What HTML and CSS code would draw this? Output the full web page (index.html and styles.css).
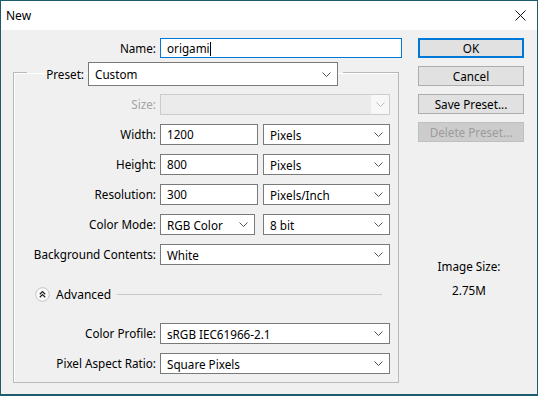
FILE: index.html
```html
<!DOCTYPE html>
<html lang="en">
<head>
  <meta charset="UTF-8" />
  <title>New</title>
  <link rel="stylesheet" href="styles.css">
</head>
<body>
  <div class="window">
    <div class="titlebar">
      <span class="title">New</span>
      <svg class="close" width="11" height="11" viewBox="0 0 11 11">
        <path d="M0.5 0.5 L10.5 10.5 M10.5 0.5 L0.5 10.5" stroke="#111" stroke-width="1" fill="none"/>
      </svg>
    </div>

    <div class="body">
      <div class="main">
        <div class="name-row">
          <label class="lbl">Name:</label>
          <div class="field focus">origami<span class="caret"></span></div>
        </div>

        <fieldset class="group">
          <legend class="preset">
            <label class="lbl">Preset:</label>
            <div class="combo tall">
              <span>Custom</span>
              <svg class="chev" width="9" height="5" viewBox="0 0 9 5"><polyline points="0.5,0.5 4.5,4.5 8.5,0.5" fill="none" stroke="#555"/></svg>
            </div>
          </legend>

          <div class="grid">
            <label class="lbl off">Size:</label>
            <div class="combo disabled">
              <span></span>
              <span class="arrow-box"><svg class="chev" width="9" height="5" viewBox="0 0 9 5"><polyline points="0.5,0.5 4.5,4.5 8.5,0.5" fill="none" stroke="#bcbcbc"/></svg></span>
            </div>

            <label class="lbl">Width:</label>
            <div class="pair">
              <div class="field num">1200</div>
              <div class="combo unit"><span>Pixels</span><svg class="chev" width="9" height="5" viewBox="0 0 9 5"><polyline points="0.5,0.5 4.5,4.5 8.5,0.5" fill="none" stroke="#555"/></svg></div>
            </div>

            <label class="lbl">Height:</label>
            <div class="pair">
              <div class="field num">800</div>
              <div class="combo unit"><span>Pixels</span><svg class="chev" width="9" height="5" viewBox="0 0 9 5"><polyline points="0.5,0.5 4.5,4.5 8.5,0.5" fill="none" stroke="#555"/></svg></div>
            </div>

            <label class="lbl">Resolution:</label>
            <div class="pair">
              <div class="field num">300</div>
              <div class="combo unit"><span>Pixels/Inch</span><svg class="chev" width="9" height="5" viewBox="0 0 9 5"><polyline points="0.5,0.5 4.5,4.5 8.5,0.5" fill="none" stroke="#555"/></svg></div>
            </div>

            <label class="lbl">Color Mode:</label>
            <div class="pair">
              <div class="combo mode"><span>RGB Color</span><svg class="chev" width="9" height="5" viewBox="0 0 9 5"><polyline points="0.5,0.5 4.5,4.5 8.5,0.5" fill="none" stroke="#555"/></svg></div>
              <div class="combo unit"><span>8 bit</span><svg class="chev" width="9" height="5" viewBox="0 0 9 5"><polyline points="0.5,0.5 4.5,4.5 8.5,0.5" fill="none" stroke="#555"/></svg></div>
            </div>

            <label class="lbl">Background Contents:</label>
            <div class="combo"><span>White</span><svg class="chev" width="9" height="5" viewBox="0 0 9 5"><polyline points="0.5,0.5 4.5,4.5 8.5,0.5" fill="none" stroke="#555"/></svg></div>

            <div class="advanced">
              <svg class="adv-icon" width="15" height="15" viewBox="0 0 15 15">
                <circle cx="7.5" cy="7.5" r="6.8" fill="#fafafa" stroke="#c4c4c4"/>
                <polyline points="4.8,7.2 7.5,4.6 10.2,7.2" fill="none" stroke="#222" stroke-width="1.2"/>
                <polyline points="4.8,10.2 7.5,7.6 10.2,10.2" fill="none" stroke="#222" stroke-width="1.2"/>
              </svg>
              <span>Advanced</span>
              <span class="rule"></span>
            </div>

            <label class="lbl">Color Profile:</label>
            <div class="combo"><span>sRGB IEC61966-2.1</span><svg class="chev" width="9" height="5" viewBox="0 0 9 5"><polyline points="0.5,0.5 4.5,4.5 8.5,0.5" fill="none" stroke="#555"/></svg></div>

            <label class="lbl">Pixel Aspect Ratio:</label>
            <div class="combo"><span>Square Pixels</span><svg class="chev" width="9" height="5" viewBox="0 0 9 5"><polyline points="0.5,0.5 4.5,4.5 8.5,0.5" fill="none" stroke="#555"/></svg></div>
          </div>
        </fieldset>
      </div>

      <div class="side">
        <button class="btn default">OK</button>
        <button class="btn">Cancel</button>
        <button class="btn">Save Preset...</button>
        <button class="btn" disabled>Delete Preset...</button>

        <div class="image-size">
          <div>Image Size:</div>
          <div>2.75M</div>
        </div>
      </div>
    </div>
  </div>
</body>
</html>
```

FILE: styles.css
```css
* {
  box-sizing: border-box;
}
body {
  margin: 0;
  font-family: 'Noto Sans', sans-serif;
  font-size: 11.7px;
  color: #000;
  background: #1f5c6b;
}
.window {
  width: 538px;
  height: 396px;
  border: 1px solid #1f5c6b;
  border-bottom-width: 2px;
  display: flex;
  flex-direction: column;
  background: #f0f0f0;
}
.titlebar {
  height: 29px;
  background: #fff;
  display: flex;
  align-items: center;
  justify-content: space-between;
  padding: 0 11px 0 5px;
  font-size: 12px;
}
.titlebar .close {
  margin-top: -1px;
}
.body {
  flex: 1;
  display: flex;
  padding: 8px 0 0 12px;
}
.main {
  width: 389px;
}
.lbl {
  text-align: right;
  line-height: 20px;
  white-space: nowrap;
}
.lbl.off {
  color: #a3a3a3;
}

/* name row */
.name-row {
  display: grid;
  grid-template-columns: 143px 242px;
  column-gap: 4px;
  height: 20px;
}
.field {
  height: 21px;
  background: #fff;
  border: 1px solid #7a7a7a;
  padding: 0 6px;
  line-height: 19px;
  white-space: nowrap;
}
.field.focus {
  height: 20px;
  border-color: #0078d7;
  line-height: 18px;
}
.caret {
  display: inline-block;
  width: 1px;
  height: 14px;
  background: #000;
  vertical-align: -3px;
}
.field.num {
  width: 98px;
}

/* group box */
.group {
  width: 386px;
  margin: 0;
  padding: 8px 8px 8px 10px;
  border: 1px solid #b8b8b8;
  box-shadow: inset 1px 1px 0 #fff;
}
.preset {
  display: flex;
  align-items: center;
  gap: 4px;
  padding: 4px 5px 0 0;
  margin-left: 3px;
}
.preset .lbl {
  width: 57px;
}
.grid {
  display: grid;
  grid-template-columns: 132px 230px;
  column-gap: 4px;
  row-gap: 9px;
}
.grid .lbl {
  line-height: 21px;
}

/* combo boxes */
.combo {
  height: 21px;
  background: #fff;
  border: 1px solid #7a7a7a;
  display: flex;
  align-items: center;
  justify-content: space-between;
  padding: 0 6px 0 6px;
  white-space: nowrap;
}
.combo.tall {
  width: 250px;
  height: 24px;
}
.combo.disabled {
  background: #ebebeb;
  border-color: #cccccc;
  padding: 0;
}
.arrow-box {
  width: 18px;
  height: 100%;
  background: #f7f7f7;
  display: flex;
  align-items: center;
  justify-content: center;
}
.chev {
  flex: none;
}
.pair {
  display: flex;
  justify-content: space-between;
}
.combo.unit {
  width: 127px;
}
.combo.mode {
  width: 95px;
}

/* advanced */
.advanced {
  grid-column: 1 / -1;
  height: 40px;
  display: flex;
  align-items: center;
  padding-left: 11px;
  padding-right: 8px;
  font-size: 12px;
}
.adv-icon {
  margin-right: 6px;
}
.rule {
  flex: 1;
  height: 1px;
  background: #c9c9c9;
  margin-left: 6px;
}

/* buttons */
.side {
  width: 106px;
  margin-left: 16px;
  display: flex;
  flex-direction: column;
  gap: 8px;
}
.btn {
  height: 20px;
  font-family: inherit;
  font-size: 11.7px;
  background: #e1e1e1;
  border: 1px solid #adadad;
  padding: 0;
  color: #000;
}
.btn.default {
  border: 2px solid #0078d7;
}
.btn:disabled {
  background: #cccccc;
  border-color: #bfbfbf;
  color: #9c9c9c;
}
.image-size {
  margin-top: 108px;
  display: flex;
  flex-direction: column;
  gap: 8px;
  align-items: center;
  line-height: 16px;
  margin-left: -4px;
}
```
